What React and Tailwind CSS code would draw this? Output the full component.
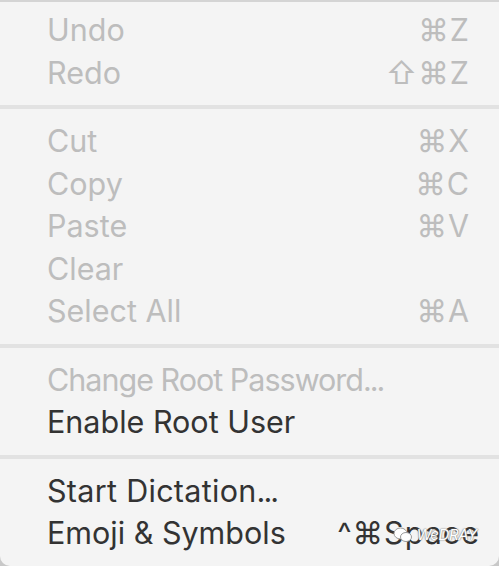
import React from "react";

const groups = [
    [
        { label: "Undo", keys: "⌘Z" },
        { label: "Redo", keys: "⇧⌘Z" },
    ],
    [
        { label: "Cut", keys: "⌘X" },
        { label: "Copy", keys: "⌘C" },
        { label: "Paste", keys: "⌘V" },
        { label: "Clear" },
        { label: "Select All", keys: "⌘A" },
    ],
    [
        { label: "Change Root Password", dots: true, track: "tracking-[-1px]" },
        { label: "Enable Root User", enabled: true },
    ],
    [
        { label: "Start Dictation", dots: true, enabled: true, track: "tracking-[0.3px]" },
        { label: "Emoji & Symbols", keys: "^⌘Space", enabled: true, wide: true },
    ],
];

const MenuRow = ({ item }) => (
    <div
        className={`flex items-center justify-between h-[42.5px] pl-[47px] pr-[29px] text-[30.5px] ${
            item.enabled ? "text-[#333333]" : "text-[#bdbdbd]"
        }`}
    >
        <span className={item.track || ""}>
            {item.label}
            {item.dots && <span className="tracking-[-2px]">...</span>}
        </span>
        {item.keys && <span className={`tracking-[1px] ${item.wide ? "-mr-[10px]" : ""}`}>{item.keys}</span>}
    </div>
);

export default function App() {
    return (
        <div className="w-[499px] h-[566px] bg-[#c8c8c8] overflow-hidden" style={{ fontFamily: "Inter, 'DejaVu Sans', sans-serif" }}>
            <div className="relative h-full bg-[#f4f4f4] border-t-2 border-[#d4d4d4] rounded-b-[10px] pt-[7px]">
                {groups.map((group, gi) => (
                    <div key={gi}>
                        {gi > 0 && (
                            <div className="py-[11px]">
                                <div className="h-[4px] bg-[#e2e2e2]" />
                            </div>
                        )}
                        {group.map((item) => (
                            <MenuRow key={item.label} item={item} />
                        ))}
                    </div>
                ))}

                {/* watermark */}
                <div className="absolute right-[22px] bottom-[20px] flex items-center gap-1 text-[15px] text-white" style={{ textShadow: "0 0 2px #888, 0 0 1px #666" }}>
                    <svg width="20" height="16" viewBox="0 0 20 16">
                        <ellipse cx="7.5" cy="6.5" rx="6.5" ry="5.5" fill="#fff" stroke="#999" strokeWidth="1" />
                        <ellipse cx="13" cy="10" rx="5.5" ry="4.5" fill="#fff" stroke="#999" strokeWidth="1" />
                    </svg>
                    <span className="italic tracking-tight">WeDRAY</span>
                </div>
            </div>
        </div>
    );
}
